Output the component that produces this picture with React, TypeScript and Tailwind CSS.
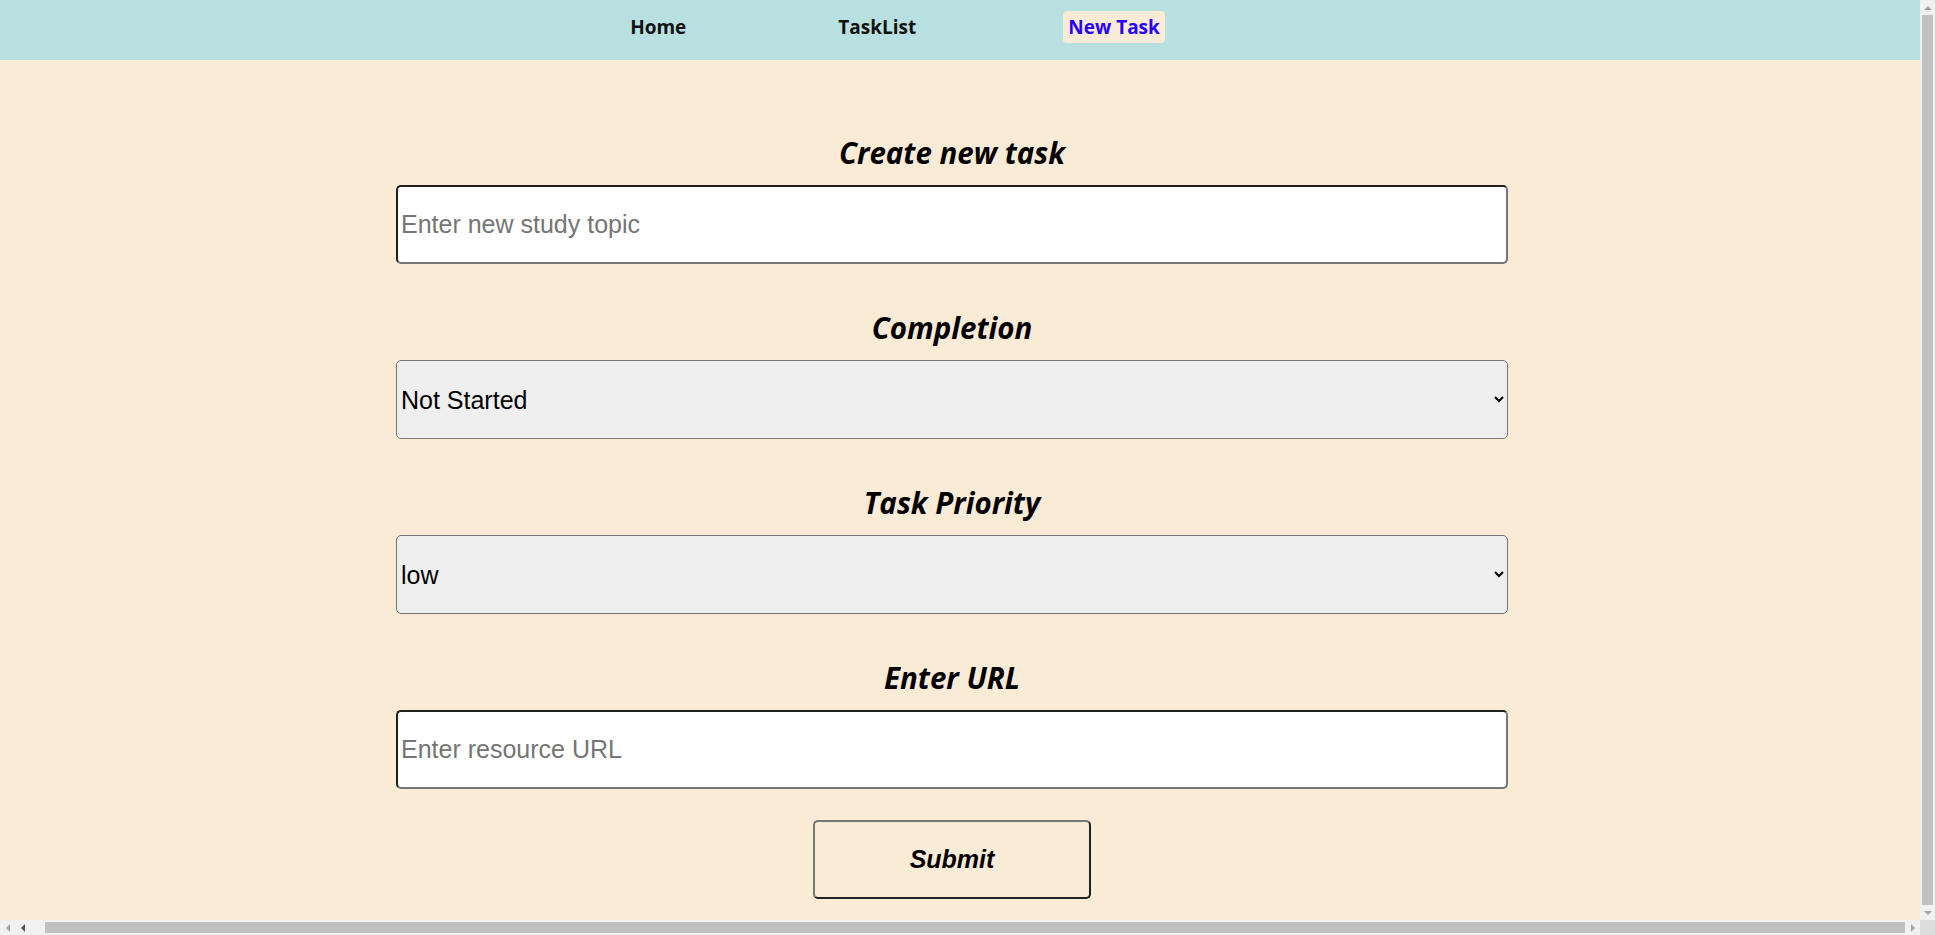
import React, { ReactNode } from "react";

const NAV_LINKS = [
  { name: "Home", active: false },
  { name: "TaskList", active: false },
  { name: "New Task", active: true },
];

const inputClass =
  "h-[79px] w-[1112px] rounded-[5px] border-2 border-t-[#1f1f1f] border-l-[#1f1f1f] border-r-[#767676] border-b-[#767676] bg-white px-[3px] font-['Liberation_Sans',Arial,sans-serif] text-[25px] text-black outline-none placeholder:text-[#757575]";

const selectClass =
  "h-[79px] w-[1112px] rounded-[5px] border border-[#767676] bg-[#efefef] font-['Liberation_Sans',Arial,sans-serif] text-[25px] text-black outline-none";

function Field({ label, first, children }: { label: string; first?: boolean; children: ReactNode }) {
  return (
    <label className={first ? "flex flex-col items-center" : "mt-[47px] flex flex-col items-center"}>
      <span className="mb-[15px] font-['Open_Sans',sans-serif] text-[29.5px] leading-[34px] font-bold italic text-black">
        {label}
      </span>
      {children}
    </label>
  );
}

function Arrow({ dir, color }: { dir: "up" | "down" | "left" | "right"; color: string }) {
  const points = {
    up: "0,4 4,0 8,4",
    down: "0,0 8,0 4,4",
    left: "4,0 4,8 0,4",
    right: "0,0 0,8 4,4",
  }[dir];
  const vertical = dir === "up" || dir === "down";
  return (
    <div className="flex h-[15px] w-[15px] shrink-0 items-center justify-center">
      <svg width={vertical ? 8 : 4} height={vertical ? 4 : 8} viewBox={vertical ? "0 0 8 4" : "0 0 4 8"}>
        <polygon points={points} fill={color} />
      </svg>
    </div>
  );
}

export default function App() {
  return (
    <div className="flex h-screen w-screen flex-col overflow-hidden">
      <div className="flex min-h-0 flex-1">
        <main className="min-w-0 flex-1 bg-[#faebd7]">
          <nav className="flex h-[60px] items-center justify-center gap-[142px] bg-[#b8e0e0] pr-[130px] pb-[6px] font-['Open_Sans',sans-serif] text-[19px] font-bold">
            {NAV_LINKS.map((link) => (
              <a
                key={link.name}
                className={
                  link.active
                    ? "rounded-[4px] bg-[#faebd7] px-[5px] py-[2px] leading-[28px] text-[#2600ff]"
                    : "rounded-[4px] px-[5px] py-[2px] leading-[28px] text-[#111]"
                }
              >
                {link.name}
              </a>
            ))}
          </nav>

          <form className="flex flex-col items-center pt-[76px] pr-[16px]" onSubmit={(e) => e.preventDefault()}>
            <Field label="Create new task" first>
              <input type="text" placeholder="Enter new study topic" className={inputClass} />
            </Field>
            <Field label="Completion">
              <select className={selectClass} defaultValue="Not Started">
                <option>Not Started</option>
                <option>In Progress</option>
                <option>Completed</option>
              </select>
            </Field>
            <Field label="Task Priority">
              <select className={selectClass} defaultValue="low">
                <option>low</option>
                <option>medium</option>
                <option>high</option>
              </select>
            </Field>
            <Field label="Enter URL">
              <input type="text" placeholder="Enter resource URL" className={inputClass} />
            </Field>
            <button
              type="submit"
              className="mt-[31px] h-[79px] w-[278px] rounded-[5px] border-2 border-t-[#767676] border-l-[#767676] border-r-[#1f1f1f] border-b-[#1f1f1f] bg-transparent font-['Liberation_Sans',Arial,sans-serif] text-[25px] font-bold italic text-black"
            >
              Submit
            </button>
          </form>
        </main>

        {/* vertical scrollbar */}
        <div className="flex w-[15px] shrink-0 flex-col bg-[#f1f1f1]">
          <Arrow dir="up" color="#a3a3a3" />
          <div className="mx-[2px] flex-1 bg-[#c1c1c1]" />
          <Arrow dir="down" color="#a3a3a3" />
        </div>
      </div>

      {/* horizontal scrollbar */}
      <div className="flex h-[15px] shrink-0">
        <div className="flex min-w-0 flex-1 items-center bg-[#f1f1f1]">
          <Arrow dir="left" color="#a3a3a3" />
          <Arrow dir="left" color="#505050" />
          <div className="ml-[15px] h-[11px] flex-1 bg-[#c1c1c1]" />
          <Arrow dir="right" color="#a3a3a3" />
        </div>
        <div className="w-[15px] bg-[#dcdcdc]" />
      </div>
    </div>
  );
}
